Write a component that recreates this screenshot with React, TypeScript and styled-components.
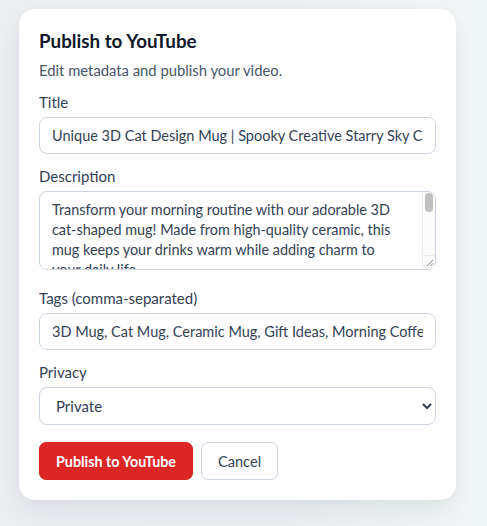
import React from "react";
import styled, { createGlobalStyle } from "styled-components";

const Global = createGlobalStyle`
  html, body { margin: 0; padding: 0; }
  body {
    font-family: Lato, "Noto Sans", sans-serif;
    background: linear-gradient(90deg, #eceef2 0%, #edf0f3 60%, #f1f6f6 100%);
    min-height: 526px;
  }
  * { box-sizing: border-box; }
`;

const Page = styled.div`
  padding: 9px 31px 26px 19px;
`;

const Card = styled.div`
  width: 437px;
  background: #ffffff;
  border-radius: 16px;
  padding: 20px 20px 20px 20px;
  box-shadow: 0 12px 32px rgba(15, 23, 42, 0.07), 0 2px 6px rgba(15, 23, 42, 0.03);
`;

const Heading = styled.h2`
  margin: 0;
  font-size: 18.8px;
  line-height: 24px;
  font-weight: 700;
  color: #0f172a;
`;

const Subtitle = styled.p`
  margin: 7px 0 0;
  font-size: 14.8px;
  line-height: 20px;
  color: #475569;
`;

const Field = styled.div`
  display: flex;
  flex-direction: column;
  margin-top: 12px;
`;

const Label = styled.label`
  font-size: 15px;
  line-height: 20px;
  color: #334155;
  margin-bottom: 5px;
`;

const TextInput = styled.input`
  width: 100%;
  height: 37px;
  border: 1px solid #cbd5e1;
  border-radius: 8px;
  padding: 0 12px;
  font-family: inherit;
  font-size: 14.5px;
  color: #334155;
  background: #fff;
  outline: none;
`;

const TextAreaWrap = styled.div`
  position: relative;
  margin-bottom: 6px;
`;

const TextArea = styled.textarea`
  display: block;
  width: 100%;
  height: 79px;
  border: 1px solid #cbd5e1;
  border-radius: 8px;
  padding: 8px 32px 8px 12px;
  font-family: inherit;
  font-size: 14.4px;
  line-height: 20px;
  color: #334155;
  background: #fff;
  outline: none;
  resize: vertical;
  overflow: hidden;
`;

const ScrollTrack = styled.div`
  position: absolute;
  top: 1px;
  right: 1px;
  bottom: 15px;
  width: 13px;
  background: #fafafa;
  border-left: 1px solid #ececec;
  border-top-right-radius: 7px;
  pointer-events: none;
`;

const ScrollThumb = styled.div`
  margin: 1px 0 0 2px;
  width: 8px;
  height: 19px;
  border-radius: 4px;
  background: #c1c1c1;
`;

const ScrollCorner = styled.div`
  position: absolute;
  right: 1px;
  bottom: 1px;
  width: 13px;
  height: 14px;
  background: #fafafa;
  border-left: 1px solid #ececec;
  border-top: 1px solid #ececec;
  border-bottom-right-radius: 7px;
  pointer-events: none;
`;

const Select = styled.select`
  width: 100%;
  height: 38px;
  border: 1px solid #cbd5e1;
  border-radius: 8px;
  padding: 0 12px;
  font-family: inherit;
  font-size: 15px;
  color: #334155;
  background: #fff;
  outline: none;
`;

const Actions = styled.div`
  display: flex;
  gap: 8px;
  margin-top: 17px;
`;

const Button = styled.button<{ $primary?: boolean }>`
  height: 38px;
  padding: 0 16px;
  border-radius: 7px;
  font-family: inherit;
  font-size: ${(p) => (p.$primary ? "14.3px" : "14.6px")};
  font-weight: ${(p) => (p.$primary ? 700 : 400)};
  color: ${(p) => (p.$primary ? "#ffffff" : "#334155")};
  background: ${(p) => (p.$primary ? "#dc2626" : "#ffffff")};
  border: 1px solid ${(p) => (p.$primary ? "#dc2626" : "#cbd5e1")};
  cursor: pointer;
`;

function Grip() {
  return (
    <svg width="12" height="12" viewBox="0 0 12 12" style={{ display: "block" }}>
      <path d="M10 4 L4 10 M10 7.5 L7.5 10" stroke="#888" strokeWidth="1" />
    </svg>
  );
}

export default function App() {
  return (
    <>
      <Global />
      <Page>
        <Card>
          <Heading>Publish to YouTube</Heading>
          <Subtitle>Edit metadata and publish your video.</Subtitle>
          <Field>
            <Label>Title</Label>
            <TextInput
              defaultValue="Unique 3D Cat Design Mug | Spooky Creative Starry Sky Cat Mug"
            />
          </Field>
          <Field>
            <Label>Description</Label>
            <TextAreaWrap>
              <TextArea
                defaultValue={
                  "Transform your morning routine with our adorable 3D cat-shaped mug! Made from high-quality ceramic, this mug keeps your drinks warm while adding charm to your daily life.\n\nPerfect for coffee, tea, or hot chocolate, this unique mug makes a wonderful gift for cat lovers and anyone who appreciates creative design."
                }
              />
              <ScrollTrack>
                <ScrollThumb />
              </ScrollTrack>
              <ScrollCorner>
                <Grip />
              </ScrollCorner>
            </TextAreaWrap>
          </Field>
          <Field>
            <Label>Tags (comma-separated)</Label>
            <TextInput defaultValue="3D Mug, Cat Mug, Ceramic Mug, Gift Ideas, Morning Coffee, Cat Lovers" />
          </Field>
          <Field>
            <Label>Privacy</Label>
            <Select defaultValue="private">
              <option value="public">Public</option>
              <option value="unlisted">Unlisted</option>
              <option value="private">Private</option>
            </Select>
          </Field>
          <Actions>
            <Button $primary>Publish to YouTube</Button>
            <Button>Cancel</Button>
          </Actions>
        </Card>
      </Page>
    </>
  );
}
